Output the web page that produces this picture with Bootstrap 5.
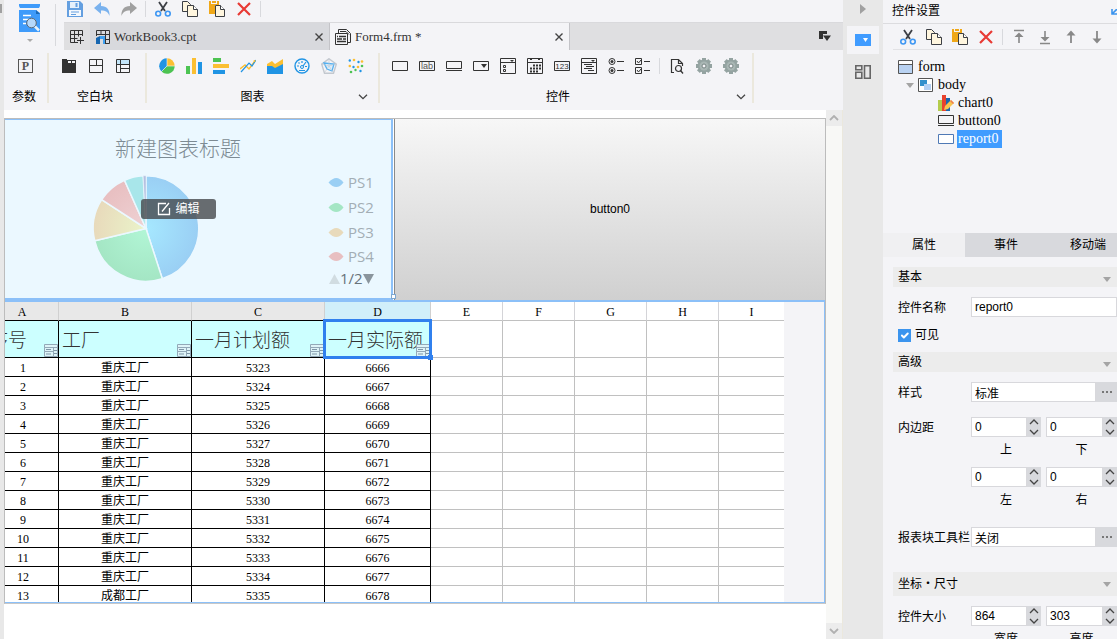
<!DOCTYPE html>
<html lang="zh-CN">
<head>
<meta charset="utf-8">
<meta name="viewport" content="width=device-width, initial-scale=1">
<title>Form4.frm</title>
<link href="https://cdn.jsdelivr.net/npm/bootstrap@5.3.0/dist/css/bootstrap.min.css" rel="stylesheet">
<style>
  :root { --pane: #f4f4f7; --strip: #e8e8e8; --tabs: #dfdfe1; --tone: #d8d9dd; --sel: #8cc0f8; }
  body { font: 12px/18px "Liberation Sans", "Noto Sans CJK SC", sans-serif; color: #000; background: var(--pane); }
  svg { display: block; flex: none; }
  button { font: inherit; color: inherit; }
  .plain { border: 0; background: none; padding: 0; display: block; }
  .roman { font-family: "Liberation Serif", "Noto Sans CJK SC", serif; }
  .edge { width: 4px; background: var(--strip); padding-top: 4px; }
  .edge i { display: block; width: 2px; height: 9px; background: #a0a0a0; }
  .vsep { width: 1px; height: 16px; background: var(--tone); margin-right: 1px; }
  .gap-icons { gap: 11px; }
  .gap-8 { gap: 8px; }

  .brand { width: 60px; height: 50px; padding: 4px 0 0 15px; }
  .brand .vsep { height: 42px; margin-left: 14px; }
  .quick { height: 22px; padding: 1px 3px 0; }
  .doc-tabs { height: 28px; background: var(--tabs); border-top: 1px solid #d9d9dc; }
  .doc-tab { width: 240px; padding: 0 6px; font-size: 13px; color: #333; border-right: 1px solid #c4c4c8; background: var(--tone); }
  .doc-tab.current { background: var(--pane); padding-left: 5px; }
  .new-tab { width: 26px; }

  .ribbon { height: 60px; padding-top: 3px; }
  .ribbon-group { height: 50px; border-right: 2px solid #ebe8dd; padding: 5px 0 0 12px; }
  .ribbon-label { height: 20px; margin: 14px 0 0 -12px; }
  .ribbon-label .plain { width: 16px; height: 18px; }
  .g-param { width: 45px; } .g-block { width: 98px; } .g-chart { width: 233px; } .g-widget { width: 374px; }

  .canvas { background: #fff; padding-top: 8px; }
  .form-body { border: 1px solid #bcbcbc; border-bottom-color: #c8c8c8; }
  .blocks { height: 181px; }
  .chart-block { width: 388px; background: #ebf8ff; border: 1px solid var(--sel); border-width: 1px 2px 2px 0; }
  .edit-btn { left: 136px; top: 79px; width: 75px; height: 20px; border-radius: 3px; background: rgba(70,72,76,.8); color: #fff; border: 0; padding: 0; }
  .grip { right: -5px; bottom: -1px; width: 5px; height: 5px; background: #fff; border: 1px solid #7fa8d0; }
  .button-block { border: 0; border-left: 1px solid #8a8a8a; background: linear-gradient(#f7f7f7, #d0d0d0); margin-left: 1px; padding-bottom: 2px; }
  .report-block { border: 1px solid var(--sel); border-width: 2px 1px 1px 0; background: var(--pane); height: 303px; overflow: hidden; }
  /* the sheet is scrolled a little to the right */
  .sheet { width: 798px; margin-left: -19px; table-layout: fixed; border-collapse: separate; border-spacing: 0; background: #fff; text-align: center; }
  .sheet th, .sheet td { padding: 2px 0 0; height: 19px; line-height: 16px; border: solid #c0c0c0; border-width: 0 1px 1px 0; font-weight: 400; }
  .sheet th:last-child, .sheet td:last-child { border-right: 0; }
  .sheet thead th { border-right-color: #d4d4d8; }
  .sheet thead .own { background: var(--strip); border-right-color: #d0d0d0; }
  .sheet thead .own.on { background: #d0effa; }
  .sheet .own { border-bottom-color: #000; border-right-color: #000; }
  .sheet tbody td:first-child { padding-left: 2px; }
  .sheet .title { height: 37px; background: #cff; font-size: 19px; font-weight: 300; color: #333; text-align: left; padding: 3px 0 0 3px !important; position: relative; white-space: nowrap; line-height: 33px; }
  .sheet .title svg { position: absolute; right: 0; bottom: 0; }
  .sheet .picked::before { content: ""; position: absolute; inset: -2px; border: 3px solid #3080ee; z-index: 1; }
  .sheet .picked::after { content: ""; position: absolute; right: -3px; bottom: -3px; width: 5px; height: 5px; background: #3080ee; z-index: 1; }
  .scroller { width: 17px; background: #f8f8f6; border-right: 1px solid #ebe8dd; }
  .scroller .plain { height: 16px; width: 16px; background: #ececec; }
  .mid { display: grid; place-items: center; }

  .rail { width: 40px; background: var(--strip); padding-top: 4px; }
  .rail .plain { width: 32px; height: 28px; display: grid; place-items: center; }
  .rail .current { background: var(--pane); margin: 12px 0 4px; }

  .side { width: 234px; overflow: hidden; background: var(--pane); }
  .side h1 { font-size: 12px; line-height: 23px; height: 24px; margin: 0; padding-left: 9px; border-bottom: 1px solid #dcdcdf; }
  .side-tools { margin-left: 10px; padding: 5px 0 0 7px; height: 26px; border-bottom: 1px solid #e2e2e5; gap: 10px; }
  .side-tools .vsep { margin: 0 -2px; }
  .tree { height: 183px; padding: 8px 0 0 15px; margin: 0; font-size: 14px; list-style: none; }
  .tree ul { list-style: none; padding-left: 20px; margin: 0; }
  .node { height: 18px; gap: 4px; line-height: 18px; }
  .node .chosen { background: #409cff; color: #fff; padding: 0 4px 0 1px; margin-left: -1px; }
  .node .twist { margin: 0 -4px 0 -16px; width: 16px; }
  .prop-tabs { height: 24px; margin-bottom: 10px; }
  .prop-tabs .plain { width: 82px; flex: none; background: var(--tone); height: 24px; }
  .prop-tabs .current { background: #f0f0f2; }
  .section { height: 20px; margin-left: 10px; padding: 0 6px 0 5px; background: #ececec; }
  .section svg { margin-top: 4px; }
  .section.tall { height: 24px; margin-top: 25px; }
  .prop { display: grid; grid-template-columns: 73px 1fr; padding-left: 15px; margin-top: 10px; align-items: start; line-height: 20px; }
  .prop > :first-child { height: 20px; line-height: 22px; }
  .prop.check { margin: 8px 0 7px; }
  .prop.check > :first-child { line-height: 20px; }
  .prop.sides { margin-top: 15px; }
  .side .field { height: 20px; min-width: 0; width: 100%; border: 1px solid #d8d8dc; border-radius: 0; background: #fff; padding: 0 3px; font: inherit; line-height: 16px; color: #000; }
  .dots { width: 21px; height: 20px; background: var(--tone); flex: none; }
  .pair { display: grid; grid-template-columns: 70px 71px; column-gap: 5px; text-align: center; }
  .spin { display: flex; height: 20px; }
  .spin .steps { width: 14px; background: var(--tone); flex: none; }
  .spin .plain { width: 14px; height: 10px; display: grid; place-items: center; }
  .pair label { display: block; line-height: 18px; padding-top: 4px; height: 30px; }
  .side .tick { width: 13px; height: 13px; margin: 0 4px 0 0; border-radius: 0; border: 0; }
  .side .tick:checked { background-color: #3b94ee; }
</style>
</head>
<body class="overflow-hidden">
<svg width="0" height="0" class="position-absolute">
  <defs>
    <symbol id="cut" viewBox="0 0 16 16"><path d="M4 1l6 9M12 1L6 10" stroke="#3c3f45" stroke-width="1.8" fill="none"/><g fill="none" stroke="#3e97f3" stroke-width="1.6"><circle cx="3.2" cy="12.6" r="2.4"/><circle cx="12.8" cy="12.6" r="2.4"/></g></symbol>
    <symbol id="copy" viewBox="0 0 16 16"><g fill="#fff6df" stroke="#3c3f45"><path d="M.5 .5h5l3 3v7h-8z"/><path d="M5.500 4.500h6l4 4v7h-10z"/><path d="M11.500 4.500v4h4" fill="#fff"/></g></symbol>
    <symbol id="paste" viewBox="0 0 16 16"><path d="M0 0h2v3h6V0h2v4H6v9H0z" fill="#f0a818"/><path d="M3 0h4v2H3z" fill="#f0a818"/><path d="M6.500 4.500h5l4 4v7h-9z" fill="#fff6df" stroke="#3c3f45"/><path d="M11.500 4.500v4h4" fill="#fff" stroke="#3c3f45"/></symbol>
    <symbol id="del" viewBox="0 0 16 16"><path d="M2 2l12 12M14 2L2 14" stroke="#e83a34" stroke-width="2.2"/></symbol>
    <symbol id="down" viewBox="0 0 8 5"><path d="M0 0h8L4 5z" fill="#a4a4a4"/></symbol>
    <symbol id="chev" viewBox="0 0 10 6"><path d="M1 .7l4 4 4-4" fill="none" stroke="#444" stroke-width="1.3"/></symbol>
    <symbol id="x" viewBox="0 0 8 8"><path d="M.5.5l7 7M7.500.5l-7 7" stroke="#444" stroke-width="1.4"/></symbol>
    <symbol id="gear" viewBox="0 0 16 16"><g fill="#94a3a1"><path d="M6 0h4v16H6z"/><path d="M6 0h4v16H6z" transform="rotate(45 8 8)"/><path d="M6 0h4v16H6z" transform="rotate(90 8 8)"/><path d="M6 0h4v16H6z" transform="rotate(135 8 8)"/><circle cx="8" cy="8" r="6.500"/></g><circle cx="8" cy="8" r="4.500" fill="#a9b6b4"/><circle cx="8" cy="8" r="2" fill="#f4f4f7" stroke="#778583"/></symbol>
    <symbol id="up1" viewBox="0 0 10 6"><path d="M1 5l4-4 4 4" fill="none" stroke="#444" stroke-width="1.3"/></symbol>
    <symbol id="dn1" viewBox="0 0 10 6"><path d="M1 1l4 4 4-4" fill="none" stroke="#444" stroke-width="1.3"/></symbol>
    <symbol id="dot3" viewBox="0 0 10 2"><path d="M0 0h2v2H0zM4 0h2v2H4zM8 0h2v2H8z" fill="#777"/></symbol>
    <symbol id="cellmark" viewBox="0 0 14 13"><path d="M.5.5h13v3H.5zM.5 3.500h9v4h-9zM.5 7.500h9v5h-9zM9.500 3.500h4v9h-4z" fill="#def4f8" stroke="#93a9b8"/><path d="M2 5.500h5M2 10h5M10 6.500h3M10 9.500h3" stroke="#7f97a8"/></symbol>
    <symbol id="wbutton" viewBox="0 0 16 16"><path d="M.5 3.500h15v7H.5zM0 12.500h16" fill="none" stroke="#333"/></symbol>
  </defs>
</svg>

<div class="d-flex vh-100">
  <div class="edge flex-shrink-0"><i></i></div>

  <main class="d-flex flex-column flex-grow-1 overflow-hidden">
    <header class="d-flex flex-shrink-0">
      <div class="brand d-flex align-items-start">
        <button class="plain" aria-label="预览"><svg width="22" height="40" viewBox="0 0 22 40"><path d="M0 0h21v2l-1 2H1L0 2z" fill="#3f9bfa"/><path d="M0 6h17l4 3v19H0z" fill="#3f9bfa"/><path d="M17 6l4 4h-4z" fill="#1c69b5"/><path d="M4 11.500h8M4 15.500h6M4 19.500h3" stroke="#fff" stroke-width="1.500"/><circle cx="12.500" cy="19" r="4.800" fill="#b5d8fb" stroke="#5d6670"/><path d="M16 22.500l4 4" stroke="#e9f3fb" stroke-width="2.500"/><path d="M8 35h6l-3 3z" fill="#aaa"/></svg></button>
        <div class="vsep"></div>
      </div>
      <div class="flex-grow-1 overflow-hidden">
        <div class="quick d-flex align-items-start gap-8">
          <div class="d-flex gap-icons">
            <button class="plain" aria-label="保存"><svg width="16" height="16" viewBox="0 0 16 16"><path d="M0 0h13l3 3v13H0z" fill="#649fe0"/><path d="M3 1h9v6H3z" fill="#e6f0fb"/><path d="M8.500 2h2v4h-2z" fill="#649fe0"/><path d="M2 9h12v6H2z" fill="#f4f8fd"/><path d="M4 11h8M4 13.500h5" stroke="#649fe0"/></svg></button>
            <button class="plain" aria-label="撤销"><svg width="16" height="16" viewBox="0 0 16 16"><path d="M7 1v4c6 0 9 4 8.500 10C14 11 12 9.500 7 9.500V13L0 7z" fill="#7ab2ee"/></svg></button>
            <button class="plain" aria-label="重做"><svg width="16" height="16" viewBox="0 0 16 16"><path d="M9 1v4C3 5 0 9 .5 15 2 11 4 9.500 9 9.500V13l7-6z" fill="#a0a0a0"/></svg></button>
          </div>
          <div class="vsep"></div>
          <div class="d-flex gap-icons">
            <button class="plain" aria-label="剪切"><svg width="16" height="16"><use href="#cut"/></svg></button>
            <button class="plain" aria-label="复制"><svg width="16" height="16"><use href="#copy"/></svg></button>
            <button class="plain" aria-label="粘贴"><svg width="16" height="16"><use href="#paste"/></svg></button>
            <button class="plain" aria-label="删除"><svg width="16" height="16"><use href="#del"/></svg></button>
          </div>
          <div class="vsep"></div>
        </div>
        <div class="doc-tabs d-flex roman">
          <button class="plain new-tab mid" aria-label="新建"><svg width="14" height="14" viewBox="0 0 14 14"><path d="M12.500 6V.5H.5v12H8M.5 4.500h12M.5 8.500h7M4.500.5v12M8.500.5v6M10.500 7v7M7 10.500h7" fill="none" stroke="#333"/></svg></button>
          <div class="doc-tab d-flex align-items-center">
            <svg width="14" height="14" viewBox="0 0 14 14"><path d="M.5 6V.5h13v13H9M.5 4.500h13M5 .5v4M9.500 .5v13M9 9.500h4" fill="none" stroke="#333"/><path d="M0 8l4-2v8H0z" fill="#1565b0"/><path d="M4 6h5v8H7V9H4z" fill="#3fa0f0"/></svg>
            <span class="flex-grow-1 ms-1">WorkBook3.cpt</span>
            <button class="plain" aria-label="关闭"><svg width="8" height="8"><use href="#x"/></svg></button>
          </div>
          <div class="doc-tab current d-flex align-items-center">
            <svg width="16" height="16" viewBox="0 0 16 16"><g fill="#f4f4f7" stroke="#333"><path d="M3.500 4V.5h8l4 4v9h-3"/><path d="M.5 4.500h12v11H.5z"/></g><path d="M2 7.500h1M4 7.500h7M2 10h5M8 10h3M2 12.500h9" stroke="#333" stroke-width="1.500"/><path d="M5 2.500h6l3 3" stroke="#333" fill="none"/></svg>
            <span class="flex-grow-1 ms-1">Form4.frm *</span>
            <button class="plain" aria-label="关闭"><svg width="8" height="8"><use href="#x"/></svg></button>
          </div>
          <button class="plain ms-auto me-2 pe-1" aria-label="标签列表"><svg width="12" height="11" viewBox="0 0 12 11"><path d="M0 0h8v3H4v5H0z" fill="#333"/><path d="M4 4.500h8L8 10z" fill="#333"/></svg></button>
        </div>
      </div>
    </header>

    <div class="ribbon d-flex flex-shrink-0">
      <section class="ribbon-group g-param">
        <div class="d-flex"><button class="plain" aria-label="参数"><svg width="20" height="16" viewBox="0 0 20 16"><rect x="2.500" y="1.500" width="14" height="13" fill="none" stroke="#555"/><text x="9.500" y="12" text-anchor="middle" font-family="Liberation Serif, serif" font-weight="700" font-size="12" fill="#555">P</text></svg></button></div>
        <div class="ribbon-label"><span class="ps-2">参数</span></div>
      </section>
      <section class="ribbon-group g-block">
        <div class="d-flex gap-icons">
          <button class="plain" aria-label="Tab块"><svg width="16" height="16" viewBox="0 0 16 16"><path d="M1 1h5v1h9v13H1z" fill="#333"/><path d="M7 3h3v2H7zM11 3h3v2h-3z" fill="#f4f4f7"/></svg></button>
          <button class="plain" aria-label="绝对画布块"><svg width="16" height="16" viewBox="0 0 16 16"><path d="M1.500 1.500h13v13h-13zM1.500 7.500h13M8.500 1.500v6" fill="none" stroke="#333"/></svg></button>
          <button class="plain" aria-label="报表块"><svg width="16" height="16" viewBox="0 0 16 16"><path d="M2 2h12v4H2z" fill="#c4e6fa"/><path d="M1.500 1.500h13v13h-13zM1.500 6.500h13M5.500 1.500v13M5.500 10.500h9" fill="none" stroke="#333"/></svg></button>
        </div>
        <div class="ribbon-label text-center pe-1">空白块</div>
      </section>
      <section class="ribbon-group g-chart">
        <div class="d-flex gap-icons">
          <button class="plain" aria-label="饼图"><svg width="16" height="16" viewBox="0 0 16 16"><path d="M8 8V.3A7.700 7.700 0 0 1 15.700 8z" fill="#fbbf32"/><path d="M8 8h7.700A7.700 7.700 0 0 1 2.500 13.400z" fill="#4cc352"/><path d="M8 8l-5.500 5.400A7.700 7.700 0 0 1 8 .3z" fill="#2094e4"/><path d="M8 0v8h8M8 8l-6 6" fill="none" stroke="#f4f4f7" stroke-width=".6"/></svg></button>
          <button class="plain" aria-label="柱形图"><svg width="16" height="16" viewBox="0 0 16 16"><path d="M0 8h4v8H0z" fill="#4cc352"/><path d="M6 0h4v16H6z" fill="#fbbf32"/><path d="M12 4h4v12h-4z" fill="#2094e4"/></svg></button>
          <button class="plain" aria-label="条形图"><svg width="16" height="16" viewBox="0 0 16 16"><path d="M0 0h8v4H0z" fill="#4cc352"/><path d="M0 6h16v4H0z" fill="#fbbf32"/><path d="M0 12h12v4H0z" fill="#2094e4"/></svg></button>
          <button class="plain" aria-label="折线图"><svg width="16" height="16" viewBox="0 0 16 16"><path d="M0 11l5-4 4 4 6-8" fill="none" stroke="#fbbf32" stroke-width="1.400"/><path d="M1 14l8-9 3 3 4-6" fill="none" stroke="#2094e4" stroke-width="1.200"/><circle cx="14.500" cy="3" r="1" fill="#fbbf32"/></svg></button>
          <button class="plain" aria-label="面积图"><svg width="16" height="16" viewBox="0 0 16 16"><path d="M0 6l5-3 3 3 8-5v11H0z" fill="#fbbf32"/><path d="M0 8l5 0 3 2 8-4v10H0z" fill="#2094e4"/></svg></button>
          <button class="plain" aria-label="仪表盘"><svg width="16" height="16" viewBox="0 0 16 16"><circle cx="8" cy="8" r="7" fill="none" stroke="#2094e4" stroke-width="1.400"/><circle cx="8" cy="9" r="1.500" fill="none" stroke="#2094e4"/><path d="M9 8l3-4M3 8h2M11 8.500h2M8 3v2M4.500 4.500l1 1M5 12.500h6" stroke="#2094e4" stroke-width="1.200"/></svg></button>
          <button class="plain" aria-label="雷达图"><svg width="16" height="16" viewBox="0 0 16 16"><path d="M8 .7l7.300 5.500-2.800 9H3.500l-2.800-9z" fill="none" stroke="#c3c8cf" stroke-width="1.400"/><path d="M3 5l10 1-2 7-5-2z" fill="#dceffc" stroke="#55b0f0" stroke-width="1.300"/><path d="M8 1v7l7-2M8 8l4 6M8 8l-4 6M8 8L1 6" stroke="#c3c8cf" fill="none" stroke-width=".6"/></svg></button>
          <button class="plain" aria-label="散点图"><svg width="16" height="16" viewBox="0 0 16 16"><g fill="#fbbf32"><circle cx="6" cy="2" r="1.300"/><circle cx="14" cy="3.500" r="1.300"/><circle cx="1.800" cy="8" r="1.300"/><circle cx="10" cy="9" r="1.300"/></g><g fill="#2094e4"><circle cx="1.800" cy="2.500" r="1.200"/><circle cx="10.500" cy="4" r="1.200"/><circle cx="5.500" cy="9" r="1.200"/><circle cx="12.500" cy="13" r="1.200"/></g><g fill="#4cc352"><circle cx="3" cy="14" r="1.300"/><circle cx="14" cy="8" r="1.300"/><circle cx="7.500" cy="12" r="1.200"/></g></svg></button>
        </div>
        <div class="ribbon-label d-flex pe-1"><span class="flex-grow-1 text-center">图表</span><button class="plain" aria-label="更多图表"><svg width="10" height="6"><use href="#chev"/></svg></button></div>
      </section>
      <section class="ribbon-group g-widget">
        <div class="d-flex gap-8">
          <div class="d-flex gap-icons">
            <button class="plain" aria-label="文本"><svg width="16" height="16" viewBox="0 0 16 16"><path d="M.5 3.500h15v9H.5z" fill="none" stroke="#333"/></svg></button>
            <button class="plain" aria-label="标签"><svg width="16" height="16" viewBox="0 0 16 16"><path d="M.5 3.500h15v9H.5z" fill="none" stroke="#333"/><text x="8" y="11" text-anchor="middle" font-family="Liberation Sans, sans-serif" font-size="9" fill="#555">lab</text></svg></button>
            <button class="plain" aria-label="按钮"><svg width="16" height="16"><use href="#wbutton"/></svg></button>
            <button class="plain" aria-label="下拉框"><svg width="16" height="16" viewBox="0 0 16 16"><path d="M.5 3.500h15v9H.5z" fill="none" stroke="#333"/><path d="M8 6h6l-3 4z" fill="#333"/></svg></button>
            <button class="plain" aria-label="下拉复选框"><svg width="16" height="16" viewBox="0 0 16 16"><path d="M.5.5h15v15H.5zM.5 4.500h15M3.500 7.500h2v2h-2zM3.500 11.500h2v2h-2z" fill="none" stroke="#333"/><path d="M10 2h4l-2 2z" fill="#333"/></svg></button>
            <button class="plain" aria-label="日期"><svg width="16" height="16" viewBox="0 0 16 16"><path d="M.5 .5h15v15H.5zM.5 4.500h15" fill="none" stroke="#333"/><path d="M3 0h2v2H3zM11 0h2v2h-2z" fill="#333"/><path d="M6 7.500h8M3 10.500h11M3 13.500h8" stroke="#333" stroke-width="2" stroke-dasharray="2 1"/></svg></button>
            <button class="plain" aria-label="数字"><svg width="16" height="16" viewBox="0 0 16 16"><path d="M.5 3.500h15v9H.5z" fill="none" stroke="#333"/><text x="8" y="11" text-anchor="middle" font-family="Liberation Sans, sans-serif" font-size="8" fill="#333">123</text></svg></button>
            <button class="plain" aria-label="下拉树"><svg width="16" height="16" viewBox="0 0 16 16"><path d="M.5.5h15v15H.5zM.5 4.500h15M3 6.500h8M5 8.500h8M3 10.500h8M7 12.500h6" fill="none" stroke="#333"/><path d="M10 2h4l-2 2z" fill="#333"/></svg></button>
            <button class="plain" aria-label="单选按钮组"><svg width="16" height="16" viewBox="0 0 16 16"><g fill="none" stroke="#333"><circle cx="4" cy="3.500" r="3"/><circle cx="4" cy="12.500" r="3"/><path d="M9 3.500h7M9 12.500h7"/></g><circle cx="4" cy="3.500" r="1.500" fill="#333"/><circle cx="4" cy="12.500" r="1.500" fill="#333"/></svg></button>
            <button class="plain" aria-label="复选按钮组"><svg width="16" height="16" viewBox="0 0 16 16"><path d="M.5.5h6v6h-6zM.5 9.500h6v6h-6zM9 3.500h6M9 12.500h6M2 3l1.500 2L6 2M2 12l1.500 2L6 11" fill="none" stroke="#333"/></svg></button>
          </div>
          <div class="vsep"></div>
          <div class="d-flex gap-icons">
            <button class="plain" aria-label="查询"><svg width="16" height="16" viewBox="0 0 16 16"><path d="M5 14.500H2.500V1.500h7l4 4V8M9.500 1.500v4h4" fill="none" stroke="#333" stroke-width="1.200"/><circle cx="9.500" cy="10.500" r="3" fill="none" stroke="#333" stroke-width="1.200"/><path d="M11.500 12.500l2.500 3" stroke="#333" stroke-width="1.300"/></svg></button>
            <button class="plain" aria-label="插件一"><svg width="16" height="16"><use href="#gear"/></svg></button>
            <button class="plain" aria-label="插件二"><svg width="16" height="16"><use href="#gear"/></svg></button>
          </div>
        </div>
        <div class="ribbon-label d-flex"><span class="flex-grow-1 text-center">控件</span><button class="plain" aria-label="更多控件"><svg width="10" height="6"><use href="#chev"/></svg></button></div>
      </section>
    </div>

    <div class="d-flex flex-grow-1 overflow-hidden bg-white">
      <div class="canvas flex-grow-1 overflow-hidden">
        <div class="form-body">
          <div class="blocks d-flex">
            <div class="chart-block position-relative flex-shrink-0">
              <svg width="386" height="178" viewBox="0 0 386 178" font-family="Open Sans, Noto Sans CJK SC, sans-serif">
                <defs>
                  <radialGradient id="p1" gradientUnits="userSpaceOnUse" cx="141" cy="108.500" r="52"><stop stop-color="#a6e8ff"/><stop offset="1" stop-color="#9acff4"/></radialGradient>
                  <radialGradient id="p2" gradientUnits="userSpaceOnUse" cx="141" cy="108.500" r="52"><stop stop-color="#b2f6d6"/><stop offset="1" stop-color="#a4e6c4"/></radialGradient>
                  <radialGradient id="p3" gradientUnits="userSpaceOnUse" cx="141" cy="108.500" r="52"><stop stop-color="#eaf4ca"/><stop offset="1" stop-color="#e8dabb"/></radialGradient>
                  <radialGradient id="p4" gradientUnits="userSpaceOnUse" cx="141" cy="108.500" r="52"><stop stop-color="#efd2d4"/><stop offset="1" stop-color="#e8bfc1"/></radialGradient>
                </defs>
                <text x="173" y="36" text-anchor="middle" font-size="21" font-weight="300" fill="#7d8b93">新建图表标题</text>
                <g stroke="#ebf8ff" stroke-width="1.500">
                  <path d="M141 108.500V55.700A52.800 52.800 0 0 1 157.300 158.700z" fill="url(#p1)"/>
                  <path d="M141 108.500L157.300 158.700A52.800 52.800 0 0 1 89.700 120.800z" fill="url(#p2)"/>
                  <path d="M141 108.500L89.700 120.800A52.800 52.800 0 0 1 96.700 79.700z" fill="url(#p3)"/>
                  <path d="M141 108.500L96.700 79.700A52.800 52.800 0 0 1 119.500 60.300z" fill="url(#p4)"/>
                  <path d="M141 108.500L119.500 60.300A52.800 52.800 0 0 1 138.200 55.800z" fill="#a8e6ea"/>
                  <path d="M141 108.500L138.200 55.800A52.800 52.800 0 0 1 141 55.700z" fill="#b5bfe0" stroke-width=".5"/>
                </g>
                <path d="M323.500 62.500q8-9 15 0q-7 9-15 0" fill="#9acff4"/>
                <path d="M323.500 87.500q8-9 15 0q-7 9-15 0" fill="#a4e6c4"/>
                <path d="M323.500 112.500q8-9 15 0q-7 9-15 0" fill="#e8dabb"/>
                <path d="M323.500 136.500q8-9 15 0q-7 9-15 0" fill="#e8bfc1"/>
                <g font-size="15" fill="#a3aeb5"><text x="343" y="68">PS1</text><text x="343" y="93">PS2</text><text x="343" y="118">PS3</text><text x="343" y="142">PS4</text></g>
                <path d="M324 164l5.500-10 5.500 10z" fill="#d1dce1"/><path d="M358 154h11l-5.500 10z" fill="#8a959d"/>
                <text x="335" y="164" font-size="15" fill="#68737a">1/2</text>
              </svg>
              <button class="edit-btn position-absolute d-flex align-items-center justify-content-center">
                <svg class="me-1" width="14" height="14" viewBox="0 0 14 14"><path d="M9 1.500H1.500v11h11V6M5 9.500L12 1" fill="none" stroke="#fff" stroke-width="1.300"/></svg>编辑
              </button>
              <span class="grip position-absolute"></span>
            </div>
            <button class="button-block flex-grow-1">button0</button>
          </div>
          <div class="report-block">
            <table class="sheet roman">
              <colgroup><col style="width:73px"><col style="width:133px"><col style="width:133px"><col style="width:106px"><col style="width:72px"><col style="width:72px"><col style="width:72px"><col style="width:72px"><col style="width:65px"></colgroup>
              <thead><tr><th class="own">A</th><th class="own">B</th><th class="own">C</th><th class="own on">D</th><th>E</th><th>F</th><th>G</th><th>H</th><th>I</th></tr></thead>
              <tbody id="rows">
                <tr>
                  <td class="own title">序号<svg width="14" height="13"><use href="#cellmark"/></svg></td>
                  <td class="own title">工厂<svg width="14" height="13"><use href="#cellmark"/></svg></td>
                  <td class="own title">一月计划额<svg width="14" height="13"><use href="#cellmark"/></svg></td>
                  <td class="own title picked">一月实际额<svg width="14" height="13"><use href="#cellmark"/></svg></td>
                  <td></td><td></td><td></td><td></td><td></td>
                </tr>
              </tbody>
            </table>
          </div>
        </div>
      </div>
      <div class="scroller flex-shrink-0 d-flex flex-column justify-content-between">
        <button class="plain mid" aria-label="向上滚动"><svg width="10" height="6" viewBox="0 0 10 6"><path d="M1 5l4-4 4 4" fill="none" stroke="#b0b0b0" stroke-width="1.800"/></svg></button>
        <button class="plain mid" aria-label="向下滚动"><svg width="10" height="6" viewBox="0 0 10 6"><path d="M1 1l4 4 4-4" fill="none" stroke="#b0b0b0" stroke-width="1.800"/></svg></button>
      </div>
    </div>
  </main>

  <nav class="rail flex-shrink-0 d-flex flex-column align-items-center">
    <svg width="6" height="10" viewBox="0 0 6 10"><path d="M0 0l6 5-6 5z" fill="#a0a0a0"/></svg>
    <button class="plain current" aria-label="控件设置"><svg width="16" height="12" viewBox="0 0 16 12"><path d="M0 0h16v12H0z" fill="#409cff"/><path d="M8 4h5l-2.500 4z" fill="#fff"/></svg></button>
    <button class="plain" aria-label="组件库"><svg width="16" height="14" viewBox="0 0 16 14"><path d="M.8.8h6v4h-6zM.8 7.200h6v6h-6zM9.500.8h5.700v12.400H9.500z" fill="none" stroke="#666" stroke-width="1.600"/></svg></button>
  </nav>

  <aside class="side flex-shrink-0">
    <h1 class="d-flex align-items-center justify-content-between fw-normal">控件设置<svg width="6" height="6" viewBox="0 0 6 6"><path d="M1 0v5h5M1 5l5-5" fill="none" stroke="#3b94ee" stroke-width="1.600"/></svg></h1>
    <div class="side-tools d-flex align-items-start">
      <button class="plain" aria-label="剪切"><svg width="16" height="16"><use href="#cut"/></svg></button>
      <button class="plain" aria-label="复制"><svg width="16" height="16"><use href="#copy"/></svg></button>
      <button class="plain" aria-label="粘贴"><svg width="16" height="16"><use href="#paste"/></svg></button>
      <button class="plain" aria-label="删除"><svg width="16" height="16"><use href="#del"/></svg></button>
      <div class="vsep"></div>
      <button class="plain" aria-label="置顶"><svg width="16" height="16" viewBox="0 0 16 16"><path d="M3 1.500h10M8 14V6" stroke="#888" stroke-width="1.600"/><path d="M3.500 8L8 3.500 12.500 8z" fill="#888"/></svg></button>
      <button class="plain" aria-label="置底"><svg width="16" height="16" viewBox="0 0 16 16"><path d="M3 14.500h10M8 2v8" stroke="#888" stroke-width="1.600"/><path d="M3.500 8L8 12.500 12.500 8z" fill="#888"/></svg></button>
      <button class="plain" aria-label="上移"><svg width="16" height="16" viewBox="0 0 16 16"><path d="M8 14V4" stroke="#888" stroke-width="1.800"/><path d="M3.500 6.500L8 1.500l4.500 5z" fill="#888"/></svg></button>
      <button class="plain" aria-label="下移"><svg width="16" height="16" viewBox="0 0 16 16"><path d="M8 2v10" stroke="#888" stroke-width="1.800"/><path d="M3.500 9.500l4.500 5 4.500-5z" fill="#888"/></svg></button>
    </div>

    <ul class="tree roman">
      <li><div class="node d-flex align-items-center"><svg width="16" height="14" viewBox="0 0 16 14"><path d="M.5.5h14v13H.5z" fill="#b9d2f2" stroke="#555"/><path d="M1 1h13v3H1z" fill="#fff"/><path d="M1 4.500h13" stroke="#555"/></svg>form</div>
        <ul>
          <li><div class="node d-flex align-items-center"><svg class="twist" width="8" height="5"><use href="#down"/></svg><svg width="16" height="14" viewBox="0 0 16 14"><path d="M.5.500h14v13H.5z" fill="#fff" stroke="#555"/><path d="M2 2h7v6H2z" fill="#3490cc"/><path d="M6 6h7v6H6z" fill="#b4d0f4"/></svg>body</div>
            <ul>
              <li><div class="node d-flex align-items-center"><svg width="16" height="16" viewBox="0 0 16 16"><path d="M0 5h4v11H0z" fill="#b4cc4c"/><path d="M4 0h4v16H4z" fill="#e8432e"/><path d="M8 3h4v13H8z" fill="#1a67ae"/><path d="M6 15l1-4 6-6 3 3-6 6z" fill="#f8c550"/><path d="M13 5l3 3-1 1-3-3z" fill="#ee7a50"/></svg>chart0</div></li>
              <li><div class="node d-flex align-items-center"><svg width="16" height="16" viewBox="0 0 16 16"><path d="M.5 2.500h15v8H.5zM0 12.500h16" fill="none" stroke="#333"/></svg>button0</div></li>
              <li><div class="node d-flex align-items-center"><svg width="16" height="10" viewBox="0 0 16 10"><path d="M.5.500h15v9H.5z" fill="#fff" stroke="#4f79b5"/></svg><span class="chosen">report0</span></div></li>
            </ul>
          </li>
        </ul>
      </li>
    </ul>

    <div class="prop-tabs d-flex">
      <button class="plain current">属性</button><button class="plain">事件</button><button class="plain">移动端</button>
    </div>

    <div class="section d-flex align-items-center justify-content-between">基本<svg width="8" height="5"><use href="#down"/></svg></div>
    <div class="prop"><label for="wname">控件名称</label><input id="wname" class="field" value="report0"></div>
    <div class="prop check"><div class="d-flex align-items-center text-nowrap"><input type="checkbox" class="form-check-input tick" id="vis" checked><label for="vis">可见</label></div></div>
    <div class="section d-flex align-items-center justify-content-between">高级<svg width="8" height="5"><use href="#down"/></svg></div>
    <div class="prop"><label for="wstyle">样式</label><div class="d-flex"><input id="wstyle" class="field" value="标准"><button class="plain dots mid" aria-label="选择样式"><svg width="10" height="2"><use href="#dot3"/></svg></button></div></div>
    <div class="prop sides"><span>内边距</span><div class="pair" data-spins="上:0,下:0,左:0,右:0"></div></div>
    <div class="prop"><label for="wbar" class="text-nowrap">报表块工具栏</label><div class="d-flex"><input id="wbar" class="field" value="关闭"><button class="plain dots mid" aria-label="设置工具栏"><svg width="10" height="2"><use href="#dot3"/></svg></button></div></div>
    <div class="section tall d-flex align-items-center justify-content-between">坐标・尺寸<svg class="mt-0" width="8" height="5"><use href="#down"/></svg></div>
    <div class="prop"><span>控件大小</span><div class="pair" data-spins="宽度:864,高度:303"></div></div>
  </aside>
</div>

<script src="https://cdn.jsdelivr.net/npm/bootstrap@5.3.0/dist/js/bootstrap.bundle.min.js"></script>
<script>
  const rows = document.getElementById('rows');
  for (let i = 1; i <= 13; i++) {
    const cells = [i, i < 13 ? '重庆工厂' : '成都工厂', 5322 + i, 6665 + i];
    rows.insertAdjacentHTML('beforeend',
      '<tr>' + cells.map(c => `<td class="own">${c}</td>`).join('') + '<td></td>'.repeat(5) + '</tr>');
  }
  document.querySelectorAll('[data-spins]').forEach((pair, n) => {
    pair.innerHTML = pair.dataset.spins.split(',').map((item, k) => {
      const [name, value] = item.split(':'), id = `spin${n}${k}`;
      return `<div><div class="spin"><input id="${id}" class="field" value="${value}"><div class="steps">
        <button class="plain" aria-label="增加"><svg width="10" height="6"><use href="#up1"/></svg></button>
        <button class="plain" aria-label="减少"><svg width="10" height="6"><use href="#dn1"/></svg></button></div></div>
        <label for="${id}">${name}</label></div>`;
    }).join('');
  });
</script>
</body>
</html>
